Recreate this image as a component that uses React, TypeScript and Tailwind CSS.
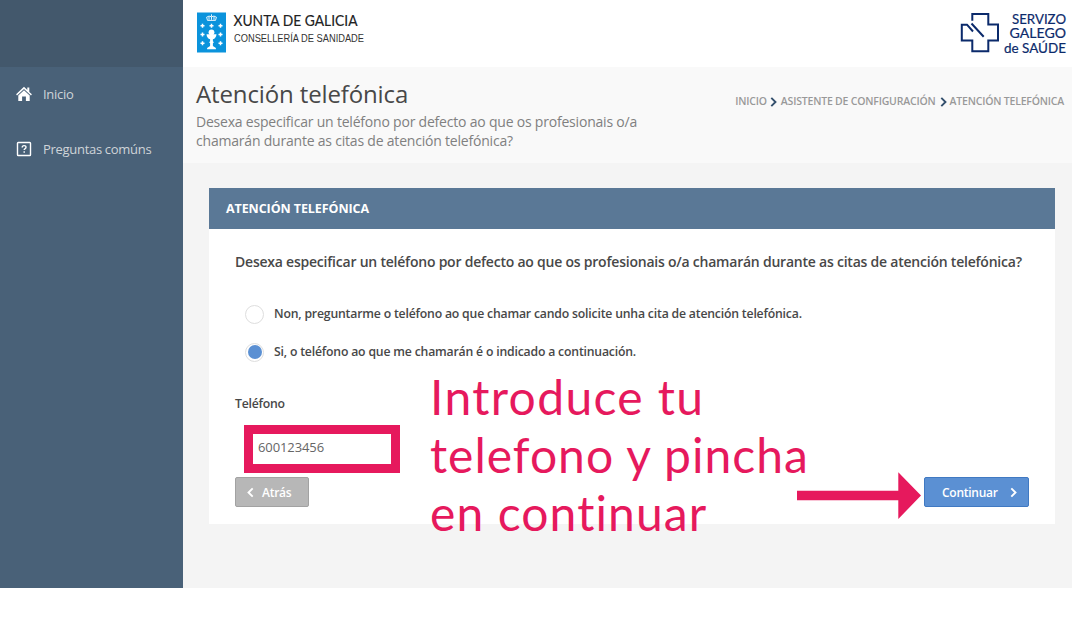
import React from "react";

function XuntaLogo() {
  return (
    <svg width="186" height="48" viewBox="0 0 186 48" className="block">
      <rect x="1" y="1.500" width="29" height="40" fill="#0b93dc" />
      <g transform="translate(0 .8)">
        <path d="M11.500 8.600 L10.600 5.400 Q13 3.400 15.500 5 Q18 3.400 20.400 5.400 L19.500 8.600 Z M15.500 5 V8 M13 4.800 V8 M18 4.800 V8 M15.500 2.500 V4.500" stroke="#fff" fill="none" strokeWidth="0.900" />
        <path
          d="M4.500 14h4M6.500 12v4M13.500 14h4M15.500 12v4M22.500 14h4M24.500 12v4M4.500 22.700h4M6.500 20.700v4M22.500 22.700h4M24.500 20.700v4M4.500 31.500h4M6.500 29.500v4M22.500 31.500h4M24.500 29.500v4"
          stroke="#fff"
          strokeWidth="1.500"
        />
        <circle cx="15.500" cy="20.500" r="2.900" fill="#fff" />
        <path d="M10.500 22.500h10q-.4 4.200-3.600 5v2l1 1-1 1v2.600l3 2v1.400h-8.800v-1.400l3-2v-2.600l-1-1 1-1v-2q-3.200-.8-3.600-5z" fill="#fff" />
      </g>
      <text x="37.500" y="15" fontFamily="Lato, sans-serif" fontSize="14.500" fill="#222" stroke="#222" strokeWidth="0.150" textLength="124" lengthAdjust="spacingAndGlyphs">XUNTA DE GALICIA</text>
      <text x="38" y="30.500" fontFamily="Liberation Sans, sans-serif" fontSize="10" fill="#333" textLength="130" lengthAdjust="spacingAndGlyphs">CONSELLERÍA DE SANIDADE</text>
    </svg>
  );
}

function SergasLogo() {
  return (
    <svg width="112" height="48" viewBox="0 0 112 48" className="block overflow-visible">
      <path d="M12.300 9.700 V3 H28.300 V13.500 H38 V29.400 H28.300 V40.300 H12.300 V29.400 H1.800 V13.700 H7 L13 20.500 M11.500 12.500 L23.700 25.700" fill="none" stroke="#0b2a6b" strokeWidth="2" />
      <g fontFamily="Lato, sans-serif" fontSize="14" fill="#0b2a6b" stroke="#0b2a6b" strokeWidth="0.200">
        <text x="52" y="12.500" textLength="54" lengthAdjust="spacingAndGlyphs">SERVIZO</text>
        <text x="49.500" y="27" textLength="56.500" lengthAdjust="spacingAndGlyphs">GALEGO</text>
        <text x="44" y="41.500" textLength="62" lengthAdjust="spacingAndGlyphs">de SAÚDE</text>
      </g>
    </svg>
  );
}

function HomeIcon() {
  return (
    <svg width="16" height="16" viewBox="0 0 16 16" className="relative -top-px block" fill="#fff">
      <path d="M8 .8 11.300 4V1.400h2V6L15.900 8.300l-.9 1.100L8 2.900 1 9.400l-.9-1.100z" />
      <path d="M8 4.200 13.700 9.500V15H9.900v-4.500H6.100V15H2.300V9.500z" />
    </svg>
  );
}

function QuestionIcon() {
  return (
    <svg width="16" height="16" viewBox="0 0 16 16" className="relative -top-px block" fill="none" stroke="#fff">
      <rect x="1.500" y="1.500" width="13" height="13" rx="0.800" strokeWidth="1.400" />
      <path d="M6.200 6.400Q6.200 4.600 8.100 4.600T10 6.300Q10 7.300 8.900 7.900Q8.200 8.300 8.200 9.100M8.200 10.300v1.400" strokeWidth="1.400" />
    </svg>
  );
}

function Chevron({ className, left = false }: { className: string; left?: boolean }) {
  return (
    <svg viewBox="0 0 7 10" className={className} fill="none" stroke="currentColor" strokeWidth="1.900">
      <path d={left ? "M5.700 .8 1.500 5 5.700 9.200" : "M1.300 .8 5.500 5 1.300 9.200"} />
    </svg>
  );
}

function Option({ label, checked }: { label: string; checked: boolean }) {
  return (
    <div className="flex h-[38px] items-center gap-[10px]">
      <span className="flex size-[19px] items-center justify-center rounded-full border border-[#dedede] bg-white">
        {checked && <span className="size-[14px] rounded-full bg-[#5b90d3]" />}
      </span>
      <span className="text-[12.250px] font-semibold tracking-[-0.190px]">{label}</span>
    </div>
  );
}

export default function App() {
  return (
    <div className="relative h-[621px] w-[1072px] overflow-hidden bg-white font-['Open_Sans',sans-serif] whitespace-nowrap">
      <div className="flex h-[588px]">
        <aside className="w-[183px] shrink-0 bg-[#496178] text-[13px] tracking-[-0.300px] text-[#cfd4d9]">
          <div className="h-[67px] bg-[#43586c]" />
          <nav>
            <a className="flex h-[55px] items-center gap-[11px] pl-4"><HomeIcon />Inicio</a>
            <a className="flex h-[55px] items-center gap-[11px] pl-4"><QuestionIcon />Preguntas comúns</a>
          </nav>
        </aside>
        <div className="flex min-w-0 grow flex-col bg-[#f4f4f4]">
          <header className="flex h-[67px] shrink-0 justify-between bg-white pt-[11px] pl-[13px]">
            <XuntaLogo />
            <SergasLogo />
          </header>
          <div className="flex h-[96px] shrink-0 justify-between bg-[#f9f9f9] pr-[8px] pl-[13px]">
            <div className="pt-[11px]">
              <h1 className="text-[24px] leading-[32px] tracking-[-0.130px] text-[#484848]">Atención telefónica</h1>
              <p className="mt-[2px] text-[14px] leading-[19px] tracking-[-0.205px] text-[#808080]">
                Desexa especificar un teléfono por defecto ao que os profesionais o/a<br />
                chamarán durante as citas de atención telefónica?
              </p>
            </div>
            <div className="mt-[26px] flex h-[18px] items-center text-[10.500px] font-semibold tracking-[-0.200px] text-[#999]">
              <span>INICIO</span>
              <Chevron className="mr-[4px] ml-[3px] h-[10px] w-[7px] text-[#34506d]" />
              <span>ASISTENTE DE CONFIGURACIÓN</span>
              <Chevron className="mr-[3px] ml-[4px] h-[10px] w-[7px] text-[#34506d]" />
              <span>ATENCIÓN TELEFÓNICA</span>
            </div>
          </div>
          <main className="mt-[25px] ml-[26px] flex h-[336px] w-[846px] flex-col bg-white text-[#484848]">
            <h2 className="flex h-[41px] shrink-0 items-center bg-[#5a7896] pt-[2px] pl-[17px] text-[12.500px] font-bold tracking-[-0.080px] text-white">ATENCIÓN TELEFÓNICA</h2>
            <div className="flex grow flex-col px-[26px] pt-[22px]">
              <p className="text-[14px] leading-[22px] font-semibold tracking-[-0.225px]">
                Desexa especificar un teléfono por defecto ao que os profesionais o/a chamarán durante as citas de atención telefónica?
              </p>
              <div className="mt-[22px] pl-[10px]">
                <Option label="Non, preguntarme o teléfono ao que chamar cando solicite unha cita de atención telefónica." checked={false} />
                <Option label="Si, o teléfono ao que me chamarán é o indicado a continuación." checked />
              </div>
              <label className="mt-[23px] text-[12.250px] leading-[20px] font-semibold tracking-[-0.220px]">Teléfono</label>
              <div className="mt-[11px] ml-[9px] flex h-[48px] w-[156px] items-center border-[9px] border-[#e6195d] bg-white pb-[3px] pl-[5px] text-[13px] tracking-[-0.100px] text-[#666]">600123456</div>
              <div className="mt-[4px] flex justify-between">
                <button className="flex h-[30px] w-[74px] items-center gap-[8px] rounded-[2px] border border-[#a2a2a2] bg-[#b7b7b7] pt-px pl-[11px] text-[12px] font-semibold tracking-[-0.260px] text-white">
                  <Chevron left className="h-[11px] w-[7px]" />Atrás
                </button>
                <button className="flex h-[30px] w-[105px] items-center justify-between rounded-[2px] border border-[#4079c2] bg-[#5b90d3] pt-px pr-[11px] pl-[17px] text-[12px] font-semibold tracking-[-0.260px] text-white">
                  Continuar<Chevron className="h-[11px] w-[7px]" />
                </button>
              </div>
            </div>
          </main>
        </div>
      </div>
      <div className="absolute top-[368px] left-[430px] font-[Lato,sans-serif] text-[48px] leading-[58px] text-[#e6195d]">
        <p className="tracking-[1.350px]">Introduce tu</p>
        <p className="tracking-[1px]">telefono y pincha</p>
        <p className="tracking-[1.100px]">en continuar</p>
      </div>
      <svg className="absolute top-[472px] left-[797px]" width="124" height="48" viewBox="0 0 124 48">
        <path d="M0 18.700H101.300V.3L124 23.500 101.300 47V28.300H0z" fill="#e6195d" />
      </svg>
    </div>
  );
}
